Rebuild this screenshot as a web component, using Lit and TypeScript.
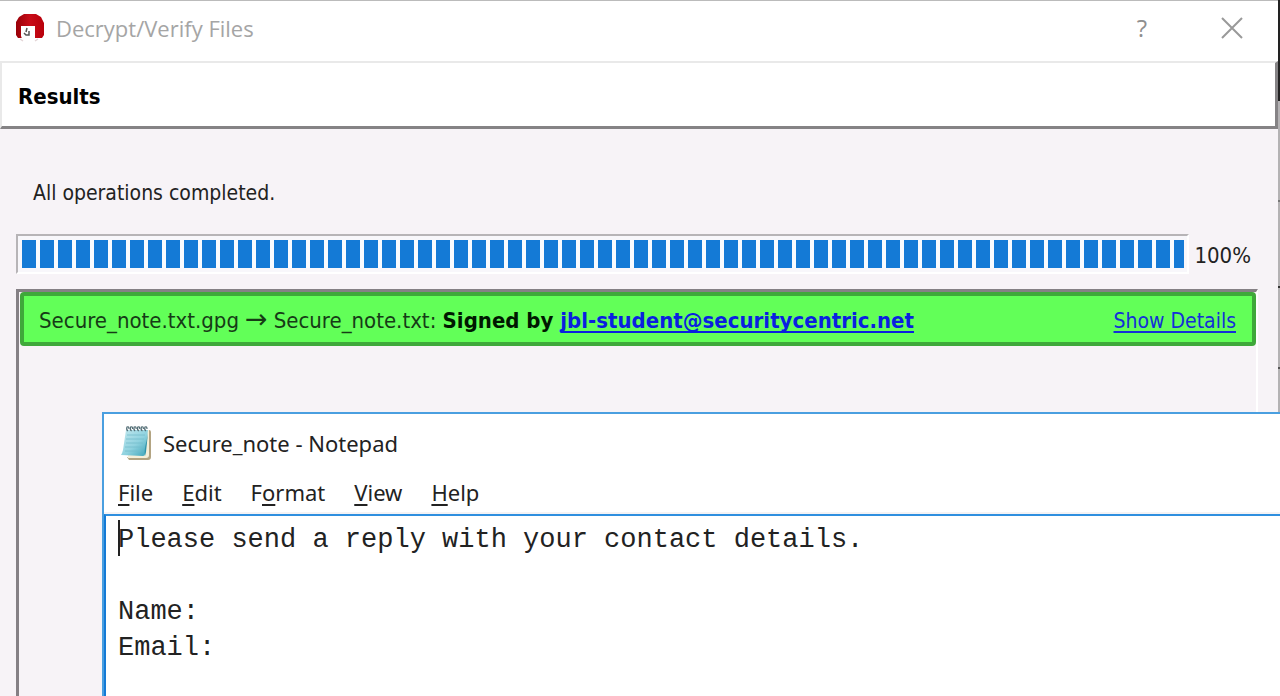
import { LitElement, html, css, svg } from "lit";
import { customElement, property } from "lit/decorators.js";

@customElement("notepad-window")
class NotepadWindow extends LitElement {
  static styles = css`
    :host { display: flex; flex-direction: column; box-sizing: border-box; background: #fff;
      border-top: 2px solid #4a9fe0; border-left: 2px solid #4a9fe0; color: #222;
      font: 22px/30px "Noto Sans", "Open Sans", sans-serif; }
    header { display: flex; align-items: center; gap: 10px; height: 57px; padding-left: 16px; box-sizing: border-box; }
    header svg { width: 33px; height: 36px; display: block; }
    h2 { margin: 0; font: inherit; }
    nav { display: flex; gap: 29px; height: 43px; padding: 0 14px; align-items: center; box-sizing: border-box; border-bottom: 2px solid #f5f3f5; }
    nav button { all: unset; }
    u { text-decoration-thickness: 2px; text-underline-offset: 3px; text-decoration-skip-ink: none; }
    textarea { box-sizing: border-box; resize: none; outline: none; display: block; width: 100%;
      border: 0; border-top: 2px solid #2f8fdf; border-left: 2px solid #147ad6; margin: 0; border-radius: 0;
      padding: 6px 12px; background: #fff; color: #222; overflow: hidden;
      font: 27px/36px "Liberation Mono", monospace; }
    .editor { display: grid; flex: 1; min-height: 0; }
    .editor > * { grid-area: 1 / 1; }
    .caret { width: 2px; height: 36px; margin: 6px 0 0 14px; background: #222; z-index: 1; }
  `;
  render() {
    const rings = [0, 1, 2, 3, 4, 5];
    return html`
      <header>
        <svg viewBox="0 0 33 36" aria-hidden="true">
          <defs><linearGradient id="page" x1="0" y1="0" x2="1" y2="1">
            <stop offset="0" stop-color="#c3e8ef"/><stop offset=".55" stop-color="#8fd2df"/><stop offset="1" stop-color="#3ba3b8"/>
          </linearGradient></defs>
          <path d="M28 5h1q2 0 2 2v25q0 3-3 3H9l-2-3h18z" fill="#b3a482"/>
          <path d="M26 5h3v25q0 3-3 3H8v-3z" fill="#f5efd9"/>
          <path d="M6 5h22l-3 24q0 2-2 2L1 30q1-1 2-5z" fill="url(#page)"/>
          <path d="M25 31q-1-5 1-13l2-10-2 19z" fill="#2f93aa"/>
          <path d="M7 10h18M6 14h18M6 18h17M5 22h17M5 26h16" stroke="#75bccb" stroke-width=".8"/>
          ${rings.map(i => svg`<path d="M${8 + i * 3.6} 6q-2-1-1-4q2-1 2 2" fill="none" stroke="#526d75" stroke-width="1.2"/>`)}
        </svg>
        <h2>Secure_note - Notepad</h2>
      </header>
      <nav>
        <button><u>F</u>ile</button><button><u>E</u>dit</button><button>F<u>o</u>rmat</button><button><u>V</u>iew</button><button><u>H</u>elp</button>
      </nav>
      <div class="editor">
        <textarea aria-label="Text editor" spellcheck="false" .value=${"Please send a reply with your contact details.\n\nName:\nEmail:"}></textarea>
        <span class="caret"></span>
      </div>`;
  }
}

@customElement("result-row")
class ResultRow extends LitElement {
  @property() source = "";
  @property() target = "";
  @property() signer = "";
  static styles = css`
    :host { display: flex; justify-content: space-between; align-items: center; box-sizing: border-box; height: 54px; margin-left: 1px;
      padding: 3px 16px 0 15px; border: 4px solid #3fa83a; border-radius: 4px; background: #62ff58; color: #163b16; white-space: nowrap; }
    p { margin: 0; font-size: 22px; }
    .arrow { font-family: "DejaVu Sans", sans-serif; font-size: 27px; line-height: 1px; margin: 0 6px; }
    b { color: #001800; }
    a { color: #1430d8; text-decoration-thickness: 2px; text-underline-offset: 3px; text-decoration-skip-ink: none; }
    b a { color: #0a1fe0; }
    .details { font-size: 21px; }
  `;
  render() {
    return html`
      <p>${this.source}<span class="arrow">→</span>${this.target}: <b>Signed by <a href="#signer">${this.signer}</a></b></p>
      <a class="details" href="#details">Show Details</a>`;
  }
}

@customElement("app-root")
class AppRoot extends LitElement {
  static styles = css`
    :host { display: block; position: relative; height: 100vh; overflow: hidden; background: #f7f3f7;
      font: 21px/28px "DejaVu Sans Condensed", "DejaVu Sans", sans-serif; color: #222; }
    .screen { display: flex; height: 100%; }
    .dialog { flex: 1; min-width: 0; display: flex; flex-direction: column; }
    .backdrop { width: 2px; background: linear-gradient(#222 0 101px, #b4b2b4 101px 200px, #777 200px 202px, #b4b2b4 202px 286px, #333 286px 288px, #b4b2b4 288px 367px, #555 367px 369px, #b4b2b4 369px); }
    .title { display: flex; align-items: center; height: 61px; box-sizing: border-box; padding: 0 34px 6px 15px;
      border-top: 1px solid #bbb; background: #fff; color: #a5a5a5; font: 22px/30px "Open Sans", "Noto Sans", sans-serif; }
    .title svg { display: block; }
    .logo { width: 30px; height: 30px; margin-right: 11px; }
    h1 { margin: 0; font: inherit; flex: 1; }
    .title button { all: unset; display: flex; justify-content: center; width: 24px; color: #8f8f8f; font-size: 24px; }
    .title button + button { margin-left: 66px; }
    .page { display: flex; align-items: center; height: 68px; box-sizing: border-box; padding: 4px 0 0 16px; background: #fff;
      border: 2px solid #e9e9e9; border-right: 3px solid #858385; border-bottom: 3px solid #858385; }
    h2 { margin: 0; font-size: 22px; color: #000; }
    .body { flex: 1; min-height: 0; display: flex; flex-direction: column; padding: 50px 20px 0 16px; }
    .status { margin: 0 0 27px 17px; }
    .meter { display: flex; align-items: center; gap: 5px; margin: 0 7px 15px 0; }
    .meter label { font-size: 22px; padding-top: 4px; }
    progress { appearance: none; flex: 1; min-width: 0; height: 40px; box-sizing: border-box; padding: 4px 3px 4px 4px;
      border: 2px solid #b7b4b7; border-right-color: #fff; border-bottom-color: #fff; background: #f8f7fb; }
    progress::-webkit-progress-bar { background: transparent; }
    progress::-webkit-progress-value { background: repeating-linear-gradient(90deg, #147ad6 0 14px, #f8fbff 14px 18px); }
    .results { flex: 1; min-height: 0; border: 3px solid #858085; border-right: 2px solid #fff; border-bottom: 0; }
    .notepad { position: absolute; left: 102px; right: 0; top: 412px; bottom: 0; }
  `;
  render() {
    return html`
      <div class="screen">
        <main class="dialog">
          <header class="title">
            <svg class="logo" viewBox="0 0 30 30" aria-hidden="true">
              <defs><linearGradient id="hair"><stop offset="0" stop-color="#980008"/><stop offset=".5" stop-color="#c90c18"/><stop offset="1" stop-color="#b8000b"/></linearGradient></defs>
              <path d="M9 1h12l5 3 3 6v12l-2 3h-7V13H6v9l2 3H3l-2-3V9l3-5z" fill="url(#hair)"/>
              <path d="M6 13h14v11q-1 4-7 4t-7-5z" fill="#fff"/>
              <path d="M12 15l-1 4M9 20l2 2h3v-4" fill="none" stroke="#555" stroke-width="1.5"/>
              <path d="M5 26l3 2M20 28l3-2" stroke="#e3d4d6" stroke-width="1.5"/>
            </svg>
            <h1>Decrypt/Verify Files</h1>
            <button aria-label="Help">?</button>
            <button aria-label="Close"><svg width="22" height="22" viewBox="0 0 22 22"><path d="M1 1l20 20M21 1L1 21" stroke="#999" stroke-width="2"/></svg></button>
          </header>
          <section class="page"><h2>Results</h2></section>
          <section class="body">
            <p class="status">All operations completed.</p>
            <div class="meter">
              <progress id="overall" max="100" value="100" aria-label="Overall progress"></progress>
              <label for="overall">100%</label>
            </div>
            <div class="results">
              <result-row source="Secure_note.txt.gpg" target="Secure_note.txt" signer="jbl-student@securitycentric.net"></result-row>
            </div>
          </section>
        </main>
        <div class="backdrop"></div>
      </div>
      <notepad-window class="notepad"></notepad-window>`;
  }
}
